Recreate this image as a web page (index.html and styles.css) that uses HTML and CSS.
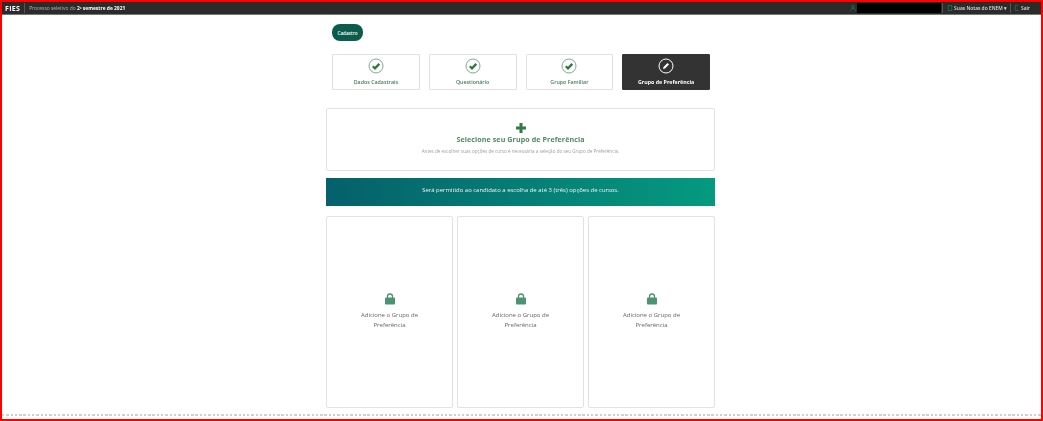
FILE: index.html
```
<!DOCTYPE html>
<html lang="pt-BR">
<head>
<meta charset="utf-8">
<title>FIES</title>
<link rel="stylesheet" href="styles.css">
</head>
<body>
<div class="frame">
  <header class="topbar">
    <div class="brand-group">
      <span class="brand">FIES</span>
      <span class="divider"></span>
      <span class="process">Processo seletivo do <b>2º semestre de 2021</b></span>
    </div>
    <div class="user-group">
      <svg class="bar-icon" viewBox="0 0 10 10"><circle cx="5" cy="3" r="2" fill="none" stroke="#1f7a58" stroke-width="1.2"/><path d="M1 9.500c0-5 8-5 8 0" fill="none" stroke="#1f7a58" stroke-width="1.200"/></svg>
      <span class="redacted"></span>
      <span class="divider"></span>
      <span class="bar-link bar-link-notes"><svg class="bar-icon" viewBox="0 0 10 10"><rect x="2" y="1" width="6" height="8" fill="none" stroke="#1f7a58" stroke-width="1.200"/></svg>Suas Notas do ENEM ▾</span>
      <span class="divider"></span>
      <span class="bar-link bar-link-exit"><svg class="bar-icon" viewBox="0 0 10 10"><path d="M7 2V1H2v8h5V8" fill="none" stroke="#1f7a58" stroke-width="1.200"/></svg>Sair</span>
    </div>
  </header>

  <main class="content">
    <div class="inner">
      <div class="pill-row"><span class="pill">Cadastro</span></div>
      <nav class="steps">
        <div class="step">
          <svg class="step-icon" viewBox="0 0 16 16"><circle cx="8" cy="8" r="7" fill="#fff" stroke="#7fa98c" stroke-width="1"/><path d="M4.800 8.200l2.200 2.200 4.300-4.500" fill="none" stroke="#2c7a3f" stroke-width="2.300"/></svg>
          <span>Dados Cadastrais</span>
        </div>
        <div class="step">
          <svg class="step-icon" viewBox="0 0 16 16"><circle cx="8" cy="8" r="7" fill="#fff" stroke="#7fa98c" stroke-width="1"/><path d="M4.800 8.200l2.200 2.200 4.300-4.500" fill="none" stroke="#2c7a3f" stroke-width="2.300"/></svg>
          <span>Questionário</span>
        </div>
        <div class="step">
          <svg class="step-icon" viewBox="0 0 16 16"><circle cx="8" cy="8" r="7" fill="#fff" stroke="#7fa98c" stroke-width="1"/><path d="M4.800 8.200l2.200 2.200 4.300-4.500" fill="none" stroke="#2c7a3f" stroke-width="2.300"/></svg>
          <span>Grupo Familiar</span>
        </div>
        <div class="step step-active">
          <svg class="step-icon" viewBox="0 0 16 16"><circle cx="8" cy="8" r="7" fill="none" stroke="#fff" stroke-width="1"/><path d="M5 11l.5-2 4-4 1.500 1.500-4 4z" fill="#fff"/></svg>
          <span>Grupo de Preferência</span>
        </div>
      </nav>

      <section class="select-panel">
        <svg class="plus" viewBox="0 0 12 12"><path d="M6 1v10M1 6h10" stroke="#2f7d3f" stroke-width="3"/></svg>
        <h2>Selecione seu Grupo de Preferência</h2>
        <p>Antes de escolher suas opções de curso é necessária a seleção do seu Grupo de Preferência.</p>
      </section>

      <div class="banner">Será permitido ao candidato a escolha de até 3 (três) opções de cursos.</div>

      <section class="cards">
        <div class="card">
          <svg class="lock" viewBox="0 0 12 12"><path d="M3.500 5V3.500a2.500 2.500 0 0 1 5 0V5" fill="none" stroke="#4e9274" stroke-width="1.300"/><rect x="1" y="4.500" width="10" height="7" rx="1" fill="#4e9274"/></svg>
          <p>Adicione o Grupo de Preferência</p>
        </div>
        <div class="card">
          <svg class="lock" viewBox="0 0 12 12"><path d="M3.500 5V3.500a2.500 2.500 0 0 1 5 0V5" fill="none" stroke="#4e9274" stroke-width="1.300"/><rect x="1" y="4.500" width="10" height="7" rx="1" fill="#4e9274"/></svg>
          <p>Adicione o Grupo de Preferência</p>
        </div>
        <div class="card">
          <svg class="lock" viewBox="0 0 12 12"><path d="M3.500 5V3.500a2.500 2.500 0 0 1 5 0V5" fill="none" stroke="#4e9274" stroke-width="1.300"/><rect x="1" y="4.500" width="10" height="7" rx="1" fill="#4e9274"/></svg>
          <p>Adicione o Grupo de Preferência</p>
        </div>
      </section>
    </div>
  </main>
  <div class="dotted"></div>
</div>
</body>
</html>
```
FILE: styles.css
```
* { box-sizing: border-box; }
html, body { margin: 0; padding: 0; background: #fff; }
body { font-family: "Open Sans", "Liberation Sans", sans-serif; }

.frame {
  width: 1043px;
  height: 421px;
  border: 2px solid #f00;
  display: flex;
  flex-direction: column;
  overflow: hidden;
  background: #fff;
}

.topbar {
  height: 13px;
  flex: none;
  background: #2b2b2b;
  border-bottom: 1px solid #777;
  display: flex;
  justify-content: space-between;
  align-items: center;
  padding: 0 5px 0 3px;
  color: #ddd;
  filter: blur(.4px);
}
.brand-group, .user-group, .bar-link { display: flex; align-items: center; }
.brand { font: 700 7px "Open Sans", sans-serif; color: #fff; letter-spacing: .3px; }
.brand-group .divider { margin: 0 4px 0 4px; }
.divider { width: 1px; height: 10px; background: #555; flex: none; }
.process { font-size: 4.900px; color: #b5b5b5; }
.process b { color: #fff; font-weight: 700; }
.bar-icon { width: 6px; height: 6px; flex: none; margin-right: 1px; }
.redacted { width: 84px; height: 10px; background: #000; margin: 0 1px 0 0; }
.bar-link { font-size: 4.900px; color: #ddd; font-weight: 600; }
.bar-link-notes { margin: 0 3px 0 4px; }
.bar-link-exit { margin: 0 6px 0 3px; }

.content { flex: 1; display: flex; justify-content: center; min-height: 0; padding-right: 2px; }
.inner { width: 389px; display: flex; flex-direction: column; filter: blur(.4px); }

.pill-row { display: flex; padding: 9px 6px 0; }
.pill {
  display: flex;
  align-items: center;
  justify-content: center;
  width: 31px;
  height: 17px;
  border-radius: 8px;
  background: #0c5c4d;
  color: #fff;
  font-size: 4.600px;
  font-weight: 600;
}

.steps { display: flex; gap: 9px; padding: 13px 5px 0 6px; }
.step {
  flex: 1;
  height: 36px;
  border: 1px solid #e2e2e2;
  border-radius: 1px;
  background: #fff;
  color: #3f7f57;
  font-size: 5.300px;
  font-weight: 600;
  display: flex;
  flex-direction: column;
  align-items: center;
  padding-top: 3px;
  gap: 4px;
}
.step-active { background: #333; border-color: #333; color: #fff; font-weight: 700; }
.step-icon { width: 16px; height: 16px; flex: none; }

.select-panel {
  margin-top: 18px;
  height: 63px;
  border: 1px solid #e2e2e2;
  border-radius: 2px;
  display: flex;
  flex-direction: column;
  align-items: center;
  padding-top: 13px;
}
.plus { width: 12px; height: 12px; flex: none; }
.select-panel h2 { margin: 0; font-size: 7.100px; font-weight: 700; color: #4f8a5f; line-height: 11px; letter-spacing: .1px; }
.select-panel p { margin: 3px 0 0; font-size: 4.600px; color: #a0a0a0; line-height: 7px; }

.banner {
  margin-top: 7px;
  height: 28px;
  background: linear-gradient(90deg, #05606b, #059a7f);
  color: #f2f2f2;
  font-size: 5.950px;
  display: flex;
  align-items: center;
  justify-content: center;
  padding-bottom: 4px;
}

.cards { margin-top: 10px; display: grid; grid-template-columns: repeat(3, 127px); gap: 4px; }
.card {
  height: 192px;
  border: 1px solid #e2e2e2;
  border-radius: 2px;
  display: flex;
  flex-direction: column;
  align-items: center;
  padding-top: 76px;
}
.lock { width: 12px; height: 12px; flex: none; }
.card p { margin: 6px 0 0; width: 70px; text-align: center; font-size: 6px; line-height: 9.500px; color: #666; }

.dotted {
  margin-top: auto;
  margin-bottom: 3px;
  height: 2px;
  flex: none;
  background: repeating-linear-gradient(90deg, #cfcfcf 0 2.300px, transparent 2.300px 4.300px);
}
```
